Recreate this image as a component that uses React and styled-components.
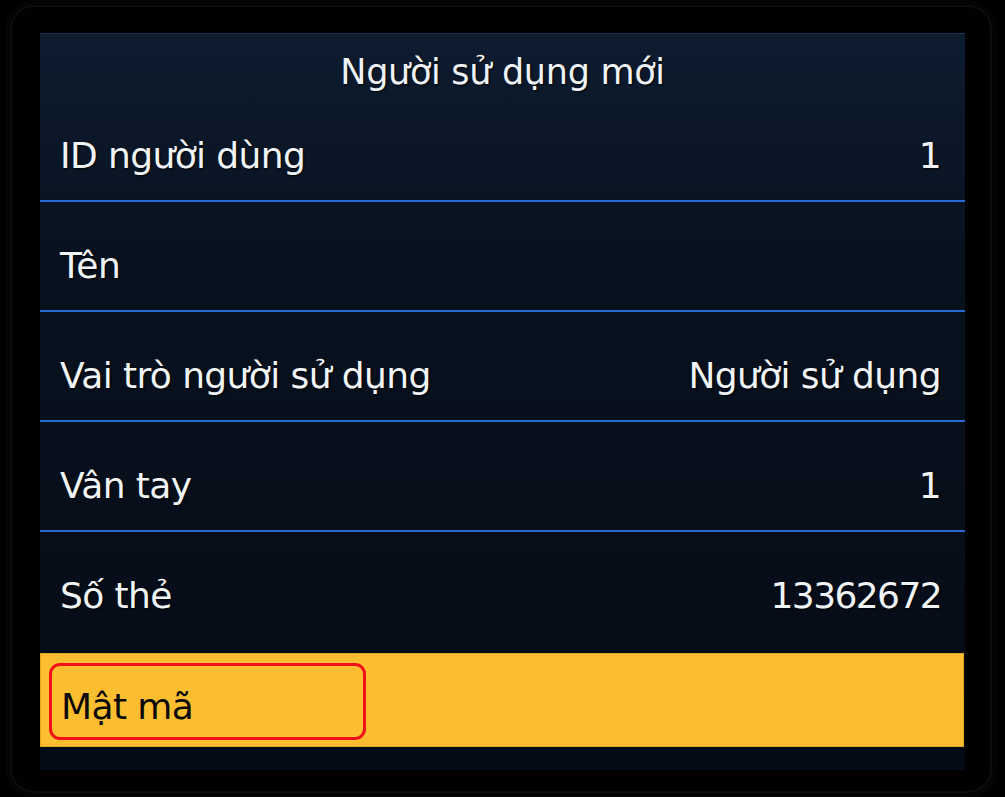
import React from "react";
import styled, { createGlobalStyle } from "styled-components";

const GlobalStyle = createGlobalStyle`
  html, body {
    margin: 0;
    padding: 0;
    background: #000;
  }
  #root {
    width: 1005px;
    height: 797px;
  }
`;

const Page = styled.div`
  width: 1005px;
  height: 797px;
  box-sizing: border-box;
  padding: 5px 11px 4px 10px;
  background: #000;
  font-family: "DejaVu Sans", "Noto Sans", sans-serif;
`;

const Bezel = styled.div`
  width: 982px;
  height: 788px;
  box-sizing: border-box;
  border: 2px solid #0d0d0d;
  border-radius: 24px;
  box-shadow: 0 0 0 5px #040404;
  padding: 26px 25px 21px 28px;
  background: #010101;
`;

const Screen = styled.div`
  width: 925px;
  height: 737px;
  display: flex;
  flex-direction: column;
  background: linear-gradient(180deg, #0e1c30 0%, #08121f 30%, #050b16 100%);
  border-top: 1px solid #1a3252;
  box-sizing: border-box;
`;

const Title = styled.div`
  height: 58px;
  box-sizing: border-box;
  padding-top: 18px;
  display: flex;
  justify-content: center;
  align-items: center;
  color: #eef2f6;
  font-size: 35px;
  line-height: 1;
  letter-spacing: -0.3px;
  text-shadow: 1px 1px 2px rgba(0, 0, 0, 0.9);
`;

const Row = styled.div`
  height: 110px;
  box-sizing: border-box;
  padding: 19px 24px 0 20px;
  display: flex;
  align-items: center;
  justify-content: space-between;
  border-bottom: 2px solid ${(p) => (p.$divider ? "#2a6ad2" : "transparent")};
  color: #f1f4f7;
  font-size: 36px;
  line-height: 1;
  letter-spacing: -0.6px;
  text-shadow: 1px 1px 2px rgba(0, 0, 0, 0.9);
`;

const SelectedRow = styled.div`
  position: relative;
  margin-top: 11px;
  width: 924px;
  height: 94px;
  box-sizing: border-box;
  padding: 14px 24px 0 20px;
  display: flex;
  align-items: center;
  background: #fbbe30;
  border: 1px solid #e3a51a;
  color: #0a0a0a;
  font-size: 36px;
  line-height: 1;
  letter-spacing: -0.6px;
`;

const Highlight = styled.div`
  position: absolute;
  left: 8px;
  top: 9px;
  width: 317px;
  height: 77px;
  box-sizing: border-box;
  border: 3px solid #f1101a;
  border-radius: 11px;
`;

const Label = styled.span``;
const Value = styled.span`
  letter-spacing: ${(p) => (p.$numeric ? "-1.6px" : "inherit")};
`;

const rows = [
  { label: "ID người dùng", value: "1" },
  { label: "Tên", value: "" },
  { label: "Vai trò người sử dụng", value: "Người sử dụng" },
  { label: "Vân tay", value: "1" },
  { label: "Số thẻ", value: "13362672", last: true },
];

export default function App() {
  return (
    <>
      <GlobalStyle />
      <Page>
        <Bezel>
          <Screen>
            <Title>Người sử dụng mới</Title>
            {rows.map((r) => (
              <Row key={r.label} $divider={!r.last}>
                <Label>{r.label}</Label>
                <Value $numeric={r.value.length > 1 && /^\d+$/.test(r.value)}>{r.value}</Value>
              </Row>
            ))}
            <SelectedRow>
              <Label>Mật mã</Label>
              <Highlight />
            </SelectedRow>
          </Screen>
        </Bezel>
      </Page>
    </>
  );
}
